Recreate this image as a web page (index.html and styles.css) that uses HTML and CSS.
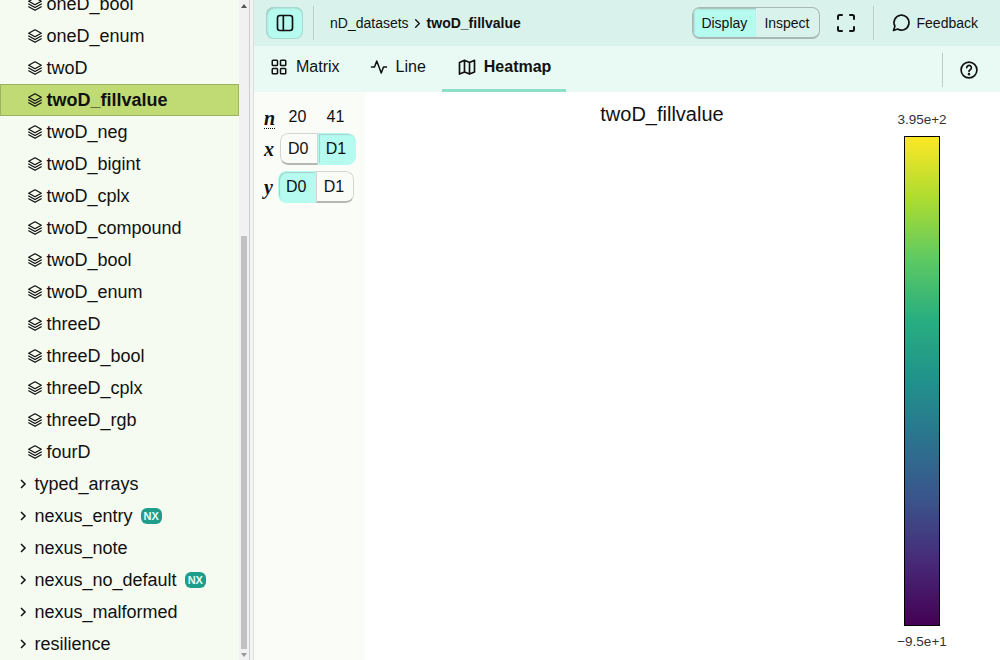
FILE: index.html
```html
<!DOCTYPE html>
<html lang="en">
<head>
  <meta charset="UTF-8">
  <title>twoD_fillvalue</title>
  <link rel="stylesheet" href="styles.css">
</head>
<body>
  <svg class="defs" width="0" height="0">
    <symbol id="layers" viewBox="2 2 20 20">
      <path d="M12 3 3 8l9 5 9-5z"/>
      <path d="m3 12 9 5 9-5"/>
      <path d="m3 16 9 5 9-5"/>
    </symbol>
    <symbol id="chev" viewBox="0 0 9 12">
      <path d="m2 2 4 4-4 4"/>
    </symbol>
  </svg>

  <aside class="sidebar">
    <ul class="tree">
      <li class="node"><svg class="layers"><use href="#layers"/></svg>oneD_bool</li>
      <li class="node"><svg class="layers"><use href="#layers"/></svg>oneD_enum</li>
      <li class="node"><svg class="layers"><use href="#layers"/></svg>twoD</li>
      <li class="node selected"><svg class="layers"><use href="#layers"/></svg>twoD_fillvalue</li>
      <li class="node"><svg class="layers"><use href="#layers"/></svg>twoD_neg</li>
      <li class="node"><svg class="layers"><use href="#layers"/></svg>twoD_bigint</li>
      <li class="node"><svg class="layers"><use href="#layers"/></svg>twoD_cplx</li>
      <li class="node"><svg class="layers"><use href="#layers"/></svg>twoD_compound</li>
      <li class="node"><svg class="layers"><use href="#layers"/></svg>twoD_bool</li>
      <li class="node"><svg class="layers"><use href="#layers"/></svg>twoD_enum</li>
      <li class="node"><svg class="layers"><use href="#layers"/></svg>threeD</li>
      <li class="node"><svg class="layers"><use href="#layers"/></svg>threeD_bool</li>
      <li class="node"><svg class="layers"><use href="#layers"/></svg>threeD_cplx</li>
      <li class="node"><svg class="layers"><use href="#layers"/></svg>threeD_rgb</li>
      <li class="node"><svg class="layers"><use href="#layers"/></svg>fourD</li>
      <li class="node group"><svg class="chev"><use href="#chev"/></svg>typed_arrays</li>
      <li class="node group"><svg class="chev"><use href="#chev"/></svg>nexus_entry<span class="nx">NX</span></li>
      <li class="node group"><svg class="chev"><use href="#chev"/></svg>nexus_note</li>
      <li class="node group"><svg class="chev"><use href="#chev"/></svg>nexus_no_default<span class="nx">NX</span></li>
      <li class="node group"><svg class="chev"><use href="#chev"/></svg>nexus_malformed</li>
      <li class="node group"><svg class="chev"><use href="#chev"/></svg>resilience</li>
    </ul>
    <div class="scrollbar">
      <span class="arrow up"></span>
      <div class="track"><div class="thumb"></div></div>
      <span class="arrow down"></span>
    </div>
  </aside>
  <div class="gutter"></div>

  <main class="main">
    <header class="topbar">
      <button class="sidebar-btn">
        <svg width="20" height="20" viewBox="0 0 24 24"><rect x="3" y="3" width="18" height="18" rx="3"/><path d="M10 3v18"/></svg>
      </button>
      <span class="vsep"></span>
      <nav class="crumbs">
        <span>nD_datasets</span>
        <svg class="crumb-chev" width="11" height="11" viewBox="0 0 24 24"><path d="m8 4 8 8-8 8"/></svg>
        <b>twoD_fillvalue</b>
      </nav>
      <div class="modes">
        <span class="mode on">Display</span>
        <span class="mode">Inspect</span>
      </div>
      <svg class="fullscreen" width="18" height="18" viewBox="0 0 18 18"><path d="M1 5V2.500A1.500 1.500 0 0 1 2.500 1H5M13 1h2.500A1.500 1.500 0 0 1 17 2.500V5M17 13v2.500a1.500 1.500 0 0 1-1.500 1.500H13M5 17H2.500A1.500 1.500 0 0 1 1 15.500V13"/></svg>
      <span class="vsep"></span>
      <div class="feedback">
        <svg width="20" height="20" viewBox="0 0 24 24"><path d="M3 21l1.700-5.100A9 9 0 1 1 8 19.300z"/></svg>
        Feedback
      </div>
    </header>

    <div class="tabs">
      <div class="tab">
        <svg width="18" height="18" viewBox="0 0 24 24"><rect x="3" y="3" width="7" height="7" rx="1"/><rect x="14" y="3" width="7" height="7" rx="1"/><rect x="3" y="14" width="7" height="7" rx="1"/><rect x="14" y="14" width="7" height="7" rx="1"/></svg>
        Matrix
      </div>
      <div class="tab">
        <svg width="18" height="18" viewBox="0 0 24 24"><path d="M2 12h4l3-8 6 16 3-8h4"/></svg>
        Line
      </div>
      <div class="tab active">
        <svg width="20" height="20" viewBox="0 0 24 24"><path d="M3 6.500 9 4l6 2.500L21 4v14l-6 2.500L9 18l-6 2.500zM9 4v14M15 6.500v14"/></svg>
        Heatmap
      </div>
      <div class="tabs-end">
        <span class="vsep"></span>
        <svg width="20" height="20" viewBox="0 0 24 24"><circle cx="12" cy="12" r="9.500"/><path d="M9.300 9.300a2.800 2.800 0 1 1 4.200 2.500c-.9.500-1.500 1-1.500 2"/><circle class="dot" cx="12" cy="17" r=".6"/></svg>
      </div>
    </div>

    <div class="content">
      <div class="dims">
        <div class="dim-row sizes">
          <i class="label n">n</i>
          <span class="size">20</span>
          <span class="size">41</span>
        </div>
        <div class="dim-row x-row">
          <i class="label">x</i>
          <div class="toggle"><span>D0</span><span class="on">D1</span></div>
        </div>
        <div class="dim-row y-row">
          <i class="label">y</i>
          <div class="toggle"><span class="on">D0</span><span>D1</span></div>
        </div>
      </div>
      <div class="plot">
        <h2 class="plot-title">twoD_fillvalue</h2>
      </div>
      <div class="legend">
        <span class="tick">3.95e+2</span>
        <div class="ramp"></div>
        <span class="tick">−9.5e+1</span>
      </div>
    </div>
  </main>
</body>
</html>
```

FILE: styles.css
```css
* {
  box-sizing: border-box;
}
html, body {
  height: 100%;
}
body {
  margin: 0;
  display: flex;
  height: 660px;
  overflow: hidden;
  font-family: "Liberation Sans", Arial, sans-serif;
  font-size: 16px;
  color: #111;
  background: #fff;
}
.defs {
  position: absolute;
}

/* explorer */
.sidebar {
  width: 249px;
  flex: none;
  display: flex;
  background: #f5fbf0;
  overflow: hidden;
}
.tree {
  list-style: none;
  margin: -12px 0 0;
  padding: 0;
  width: 239px;
  flex: none;
  font-size: 18px;
}
.node {
  height: 32px;
  display: flex;
  align-items: center;
  padding-left: 28px;
  white-space: nowrap;
}
.node.group {
  padding-left: 19px;
}
.node.selected {
  background: #c0da74;
  border: 1px solid #9db35f;
  padding-left: 27px;
  font-weight: bold;
}
.layers {
  width: 14px;
  height: 14px;
  margin-right: 4.500px;
  fill: none;
  stroke: #111;
  stroke-width: 1.800;
  stroke-linejoin: round;
  stroke-linecap: round;
}
.chev {
  width: 9px;
  height: 12px;
  margin-right: 6.500px;
  fill: none;
  stroke: #111;
  stroke-width: 1.500;
}
.nx {
  margin-left: 8px;
  padding: 0 3px;
  height: 16px;
  line-height: 16px;
  border-radius: 6px;
  background: #1f9d8b;
  color: #e8fbf5;
  font-size: 11px;
  font-weight: bold;
}
.scrollbar {
  width: 10px;
  flex: none;
  display: flex;
  flex-direction: column;
  background: #f1f1f1;
}
.arrow {
  height: 11px;
  flex: none;
  display: flex;
  justify-content: center;
  align-items: center;
}
.arrow.up::before {
  content: "";
  border: 3px solid transparent;
  border-top: 0;
  border-bottom: 4px solid #555;
}
.arrow.down::before {
  content: "";
  border: 3px solid transparent;
  border-bottom: 0;
  border-top: 4px solid #999;
}
.track {
  flex: 1;
  display: flex;
  flex-direction: column;
  justify-content: flex-end;
}
.thumb {
  height: 413px;
  margin: 0 2px;
  background: #c1c1c1;
}
.gutter {
  width: 5px;
  flex: none;
  background: #f1f5f3;
  border-left: 1px solid #ccc;
  border-right: 1px solid #ddd;
}

/* main area */
.main {
  flex: 1;
  min-width: 0;
  display: flex;
  flex-direction: column;
}
.topbar {
  height: 46px;
  flex: none;
  display: flex;
  align-items: center;
  padding: 0 22px 0 12px;
  background: #d9f3ec;
  font-size: 14px;
}
.topbar svg, .tabs svg {
  fill: none;
  stroke: #111;
  stroke-width: 2;
  stroke-linecap: round;
  stroke-linejoin: round;
}
.sidebar-btn {
  width: 37px;
  height: 32px;
  display: flex;
  align-items: center;
  justify-content: center;
  padding: 0;
  border: none;
  border-radius: 8px;
  background: #b5fbf0;
  box-shadow: inset 0 0 0 1px #a6d8d0, inset 1px 1px 2px #9fb5b0;
}
.vsep {
  width: 1px;
  height: 34px;
  background: #b9cdc8;
  flex: none;
}
.sidebar-btn + .vsep {
  margin-left: 10px;
}
.crumbs {
  display: flex;
  align-items: center;
  gap: 3.500px;
  margin-left: 16px;
  flex: 1;
}
.topbar .crumb-chev {
  stroke-width: 3;
}
.modes {
  display: flex;
  height: 32px;
  border-radius: 8px;
  overflow: hidden;
  border: 1px solid #a8b8b4;
  border-bottom-width: 2px;
}
.mode {
  padding: 0 9px 0 8px;
  display: flex;
  align-items: center;
}
.mode.on {
  background: #b5fbf0;
  width: 63px;
  box-shadow: inset 1px 1px 2px #9fb5b0;
}
.fullscreen {
  margin: 0 18px 0 17px;
}
.feedback {
  display: flex;
  align-items: center;
  gap: 6px;
  margin-left: 17px;
}
.tabs {
  height: 46px;
  flex: none;
  display: flex;
  padding-left: 4px;
  background: #e9f9f4;
}
.tab {
  display: flex;
  align-items: center;
  gap: 8px;
  padding: 0 12px 1px;
  margin-right: 4px;
  border-bottom: 3px solid transparent;
}
.tab:first-child {
  margin-right: 6px;
}
.tab.active {
  font-weight: bold;
  gap: 7px;
  border-bottom-color: #8cdfc6;
  padding: 0 15px 1px;
}
.tabs-end {
  margin-left: auto;
  display: flex;
  align-items: center;
  gap: 16px;
  padding-right: 21px;
  padding-top: 2px;
}
.tabs .dot {
  fill: #111;
}

/* dimension mapper + plot */
.content {
  flex: 1;
  display: flex;
  min-height: 0;
}
.dims {
  width: 111px;
  flex: none;
  background: #fafcf8;
  padding: 13px 0 0 10px;
}
.dim-row {
  display: flex;
  align-items: center;
}
.sizes {
  height: 26px;
}
.x-row {
  height: 36px;
}
.y-row {
  height: 40px;
}
.label {
  width: 14px;
  font-family: "Liberation Serif", serif;
  font-size: 20px;
  font-weight: bold;
}
.x-row .label {
  width: 16px;
}
.label.n {
  width: 14.500px;
  text-decoration: underline dotted 1px;
  text-underline-offset: 3px;
}
.size {
  width: 38px;
  text-align: center;
  padding-bottom: 3px;
}
.toggle {
  display: flex;
  height: 32px;
  width: 75.500px;
  border-radius: 8px;
  overflow: hidden;
  background: #fafcf8;
}
.toggle span {
  flex: 1;
  display: flex;
  align-items: center;
  justify-content: center;
  padding-right: 1.500px;
  border: 1px solid #d2d6d3;
  border-bottom: 2px solid #b4b8b5;
}
.toggle span:first-child {
  border-radius: 8px 0 0 8px;
}
.toggle span:last-child {
  border-radius: 0 8px 8px 0;
}
.toggle .on {
  background: #b5fbf0;
  border-color: #b5fbf0;
  box-shadow: inset 1px 1px 1px #a8cfca;
}
.plot {
  flex: 1;
  text-align: center;
  padding-top: 11px;
}
.plot-title {
  margin: 0;
  font-size: 20px;
  font-weight: normal;
  padding-left: 93px;
}
.legend {
  width: 112px;
  flex: none;
  display: flex;
  flex-direction: column;
  align-items: center;
  padding: 20px 0 0;
  margin-right: 22px;
}
.tick {
  font-size: 13.500px;
  color: #333;
  height: 24px;
}
.ramp {
  width: 36px;
  height: 490px;
  flex: none;
  border: 1px solid #000;
  background: linear-gradient(to top, #440154, #482878, #3b528b, #2c728e, #21918c, #28ae80, #5ec962, #addc30, #fde725);
}
.legend .tick:last-child {
  margin-top: 8px;
}
```
